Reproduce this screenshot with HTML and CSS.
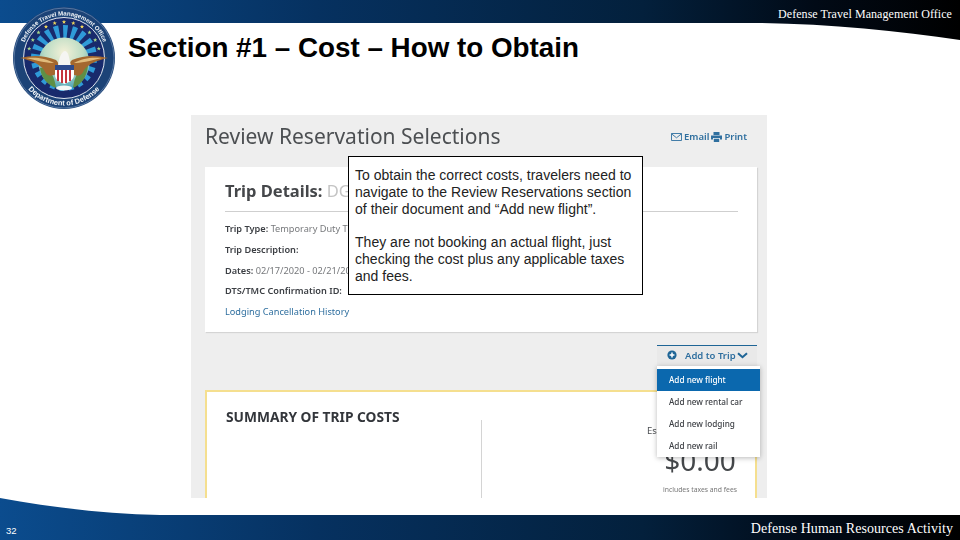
FILE: index.html
```html
<!DOCTYPE html>
<html lang="en">
<head>
<meta charset="utf-8">
<title>Section #1 – Cost – How to Obtain</title>
<link rel="stylesheet" href="styles.css">
</head>
<body>
<div class="slide">
  <header class="top">
    <svg class="swoosh swoosh-top" width="960" height="42" viewBox="0 0 960 42">
      <defs>
        <linearGradient id="barTop" gradientUnits="userSpaceOnUse" x1="0" y1="0" x2="960" y2="0">
          <stop offset="0" stop-color="#0b4c8e"/><stop offset=".33" stop-color="#063160"/><stop offset=".67" stop-color="#03203c"/><stop offset=".85" stop-color="#010a16"/><stop offset="1" stop-color="#000"/>
        </linearGradient>
      </defs>
      <path d="M0 0H960V40C900 31 830 24 762 23H0Z" fill="url(#barTop)"/>
    </svg>
    <span class="org">Defense Travel Management Office</span>
  </header>

  <svg class="seal" width="104" height="104" viewBox="-52 -52 104 104" aria-label="Department of Defense seal">
    <defs>
      <path id="arcTop" d="M-42.5 0A42.5 42.5 0 0 1 42.5 0"/>
      <path id="arcBottom" d="M-47.5 0A47.5 47.5 0 0 0 47.5 0"/>
      <polygon id="st" points="0,-2.2 .6,-.7 2.1,-.7 .9,.3 1.3,1.8 0,.9 -1.3,1.8 -.9,.3 -2.1,-.7 -.6,-.7"/>
      <radialGradient id="globe" cx=".5" cy=".3" r=".75"><stop offset="0" stop-color="#f4f1d8"/><stop offset=".5" stop-color="#bcdcc4"/><stop offset="1" stop-color="#3f9cb8"/></radialGradient>
    </defs>
    <circle r="51" fill="#1c4377"/>
    <circle r="50" fill="none" stroke="#7f9bbd" stroke-width=".6"/>
    <circle r="40.5" fill="#182a6c" stroke="#dfe6ee" stroke-width="1"/>
    <circle r="20" fill="none" stroke="#2f9ad8" stroke-width="26" stroke-dasharray="3.2 3"/>
    <g fill="#f0d65a">
      <use href="#st" x="0" y="-36"/><use href="#st" x="-9.3" y="-34.8"/><use href="#st" x="9.3" y="-34.8"/>
      <use href="#st" x="-18" y="-31.2"/><use href="#st" x="18" y="-31.2"/>
    </g>
    <g fill="#a8d68a">
      <use href="#st" x="-25.5" y="-25.5"/><use href="#st" x="25.5" y="-25.5"/>
      <use href="#st" x="-31.2" y="-18"/><use href="#st" x="31.2" y="-18"/>
      <use href="#st" x="-34.8" y="-9.3"/><use href="#st" x="34.8" y="-9.3"/>
    </g>
    <circle cy="5" r="25.5" fill="url(#globe)"/>
    <path d="M-24 10C-14 8-9 20-8 30-16 27-23 20-24 10ZM24 8C15 8 10 20 9 30 16 27 23 20 24 8Z" fill="#5f8f45"/>
    <path d="M-44 0C-32-3-20-3-8 2-4 6-4 12-8 16-14 19-18 18-20 12-24 6-34 2-44 0Z" fill="#a4682f"/>
    <path d="M44 0C32-3 20-3 8 2 4 6 4 12 8 16 14 19 18 18 20 12 24 6 34 2 44 0Z" fill="#a4682f"/>
    <path d="M-38 0C-28-1-18 0-10 5-16 5-26 3-38 0ZM38 0C28-1 18 0 10 5 16 5 26 3 38 0Z" fill="#e1bc7c"/>
    <path d="M-6 8C-5 0-3-6 1-7 5-6 5 0 7 8Z" fill="#f5f5f2"/>
    <path d="M-9 7H10V17C10 22 5 24 .5 26-4 24-9 22-9 17Z" fill="#fff"/>
    <path d="M-9 7H10V12H-9Z" fill="#2c4a8c"/>
    <path d="M-7 12H-5V23H-7ZM-3 12H-1V25H-3ZM1 12H3V25H1ZM5 12H7V23H5Z" fill="#c4343c"/>
    <ellipse cx="0" cy="30" rx="8" ry="2.6" fill="#f3f6f4"/>
    <text class="seal-text seal-text-top"><textPath href="#arcTop" startOffset="50%" text-anchor="middle">Defense Travel Management Office</textPath></text>
    <text class="seal-text"><textPath href="#arcBottom" startOffset="50%" text-anchor="middle">Department of Defense</textPath></text>
  </svg>

  <main class="body">
    <h1 class="title">Section #1 – Cost – How to Obtain</h1>

    <section class="shot">
      <div class="shot-blur">
        <div class="shot-head">
          <h2 class="shot-title">Review Reservation Selections</h2>
          <div class="shot-links">
            <svg class="ico" width="11" height="8" viewBox="0 0 11 8"><path d="M.5.5H10.5V7.5H.5ZM.5.8L5.5 4.8 10.5.8" fill="none" stroke="#2f6f9f" stroke-width=".9"/></svg>
            <span>Email</span>
            <svg class="ico" width="11" height="10" viewBox="0 0 11 10"><path d="M2.5 0H8.5V3H2.5ZM0 3.5H11V7.5H9V6H2V7.5H0ZM2.8 6.8H8.2V10H2.8Z" fill="#2f6f9f"/></svg>
            <span>Print</span>
          </div>
        </div>

        <div class="card">
          <h3 class="card-title">Trip Details: <span class="card-title-dim">DG</span></h3>
          <hr class="rule">
          <p class="row"><b>Trip Type:</b> Temporary Duty Tr</p>
          <p class="row"><b>Trip Description:</b></p>
          <p class="row"><b>Dates:</b> 02/17/2020 - 02/21/202</p>
          <p class="row"><b>DTS/TMC Confirmation ID:</b></p>
          <p class="row link">Lodging Cancellation History</p>
        </div>

        <div class="add-row">
          <div class="add-btn">
            <svg width="10" height="10" viewBox="0 0 10 10"><circle cx="5" cy="5" r="4.6" fill="#1f6596"/><path d="M5 2.6V7.4M2.6 5H7.4" stroke="#fff" stroke-width="1.5"/></svg>
            <span class="add-label">Add to Trip</span>
            <svg width="11" height="7" viewBox="0 0 11 7"><path d="M1 1.2L5.5 5.2 10 1.2" fill="none" stroke="#1f6596" stroke-width="2"/></svg>
          </div>
        </div>

        <div class="summary">
          <div class="summary-left"><h3 class="summary-title">SUMMARY OF TRIP COSTS</h3></div>
          <div class="summary-right">
            <p class="est">Es</p>
            <p class="amount">$0.00</p>
            <p class="fine">includes taxes and fees</p>
          </div>
        </div>

        <ul class="menu">
          <li class="menu-item active">Add new flight</li>
          <li class="menu-item">Add new rental car</li>
          <li class="menu-item">Add new lodging</li>
          <li class="menu-item">Add new rail</li>
        </ul>
      </div>

      <div class="callout">
        <p>To obtain the correct costs, travelers need to navigate to the Review Reservations section of their document and “Add new flight”.</p>
        <p>They are not booking an actual flight, just checking the cost plus any applicable taxes and fees.</p>
      </div>
    </section>
  </main>

  <footer class="bottom">
    <svg class="swoosh swoosh-bottom" width="960" height="43" viewBox="0 0 960 43">
      <defs>
        <linearGradient id="barBottom" gradientUnits="userSpaceOnUse" x1="0" y1="0" x2="960" y2="0">
          <stop offset="0" stop-color="#0b4c8e"/><stop offset=".33" stop-color="#063160"/><stop offset=".67" stop-color="#03203c"/><stop offset=".85" stop-color="#010a16"/><stop offset="1" stop-color="#000"/>
        </linearGradient>
      </defs>
      <path d="M0 1C50 10 105 17 160 18H960V43H0Z" fill="url(#barBottom)"/>
    </svg>
    <span class="page-no">32</span>
    <span class="org-foot">Defense Human Resources Activity</span>
  </footer>
</div>
</body>
</html>
```
FILE: styles.css
```css
* { box-sizing: border-box; }
html, body { margin: 0; padding: 0; background: #fff; }
.slide {
  position: relative;
  width: 960px;
  height: 540px;
  overflow: hidden;
  display: flex;
  flex-direction: column;
  background: #fff;
  font-family: "Liberation Sans", Arial, sans-serif;
}

/* top and bottom bars */
.top {
  position: relative;
  height: 24px;
  flex: none;
  display: flex;
  justify-content: flex-end;
  align-items: flex-start;
  padding: 7px 8px 0 0;
}
.swoosh { position: absolute; left: 0; display: block; }
.swoosh-top { top: 0; }
.swoosh-bottom { top: -18px; }
.org {
  position: relative;
  font: 12px/14px "Liberation Serif", "Times New Roman", serif;
  letter-spacing: .06px;
  color: #fff;
}

.seal { position: absolute; left: 12px; top: 6px; z-index: 2; filter: blur(.35px); }
.seal-text {
  font: 700 7.4px "Liberation Sans", Arial, sans-serif;
  fill: #f2f5f8;
}
.seal-text-top { font-size: 6.1px; }

/* main area */
.body {
  flex: 1;
  min-height: 0;
  display: flex;
  flex-direction: column;
}
.title {
  margin: 7px 0 0 128px;
  font: 700 27.8px/33px "Liberation Sans", Arial, sans-serif;
  color: #000;
  height: 84px;
}

.shot {
  position: relative;
  width: 576px;
  height: 383px;
  margin-left: 191px;
  background: #eeeeee;
}
.shot-blur {
  position: relative;
  height: 100%;
  padding: 0 10px 0 14px;
  overflow: hidden;
  font-family: "Noto Sans", sans-serif;
  filter: blur(.35px);
}
.shot-head {
  height: 52px;
  display: flex;
  justify-content: space-between;
  align-items: flex-start;
  padding-top: 6px;
}
.shot-title {
  margin: 0;
  font: 400 21px/30px "Noto Sans", sans-serif;
  color: #4c4f52;
}
.shot-links {
  display: flex;
  align-items: center;
  gap: 2px;
  margin: 9px 10px 0 0;
  font-size: 9.5px;
  font-weight: 600;
  line-height: 13px;
  color: #2f6f9f;
}

.card {
  height: 165px;
  background: #fff;
  padding: 12px 19px 0 20px;
  box-shadow: 1px 1px 1px #d4d4d4;
}
.card-title {
  margin: 0;
  font: 700 16.5px/24px "Noto Sans", sans-serif;
  color: #45474a;
}
.card-title-dim { font-weight: 400; color: #c4c4c4; }
.rule {
  margin: 8px 0 7px;
  border: 0;
  border-top: 1px solid #cfcfcf;
}
.row {
  margin: 0;
  height: 20.8px;
  font-size: 9.2px;
  line-height: 20px;
  color: #77797c;
}
.row b { color: #3c3f44; font-weight: 600; }
.link { color: #2f6f9f; }

.add-row {
  display: flex;
  justify-content: flex-end;
  margin-top: 13px;
  height: 45px;
}
.add-btn {
  width: 100px;
  height: 21px;
  padding: 0 0 2px 10px;
  border-top: 1px solid #1f6596;
  background: #e9e9e9;
  display: flex;
  align-items: center;
  font-size: 9.5px;
  font-weight: 600;
  color: #2f6f9f;
}
.add-label { margin: 0 2px 0 8px; width: 50px; white-space: nowrap; }
.summary {
  display: flex;
  height: 150px;
  background: #fff;
  border: solid #f5df8f;
  border-width: 2px 2px 0 2px;
}
.summary-left {
  width: 275px;
  padding: 16px 0 0 19px;
  position: relative;
}
.summary-left::after {
  content: "";
  position: absolute;
  right: 0;
  top: 28px;
  bottom: 0;
  width: 1px;
  background: #d4d4d4;
}
.summary-title {
  margin: 0;
  font: 700 13.75px/17px "Noto Sans", sans-serif;
  color: #33363b;
}
.summary-right {
  flex: 1;
  padding-top: 32px;
  display: flex;
  flex-direction: column;
  align-items: flex-end;
  text-align: center;
  color: #4c4f52;
}
.est { margin: 0; width: 108px; text-align: left; font-size: 9.5px; line-height: 14px; }
.amount { margin: -1px 0 1px; width: 110px; font-size: 28px; line-height: 46px; color: #44474a; }
.fine { margin: 1px 0 0; width: 110px; font-size: 6.8px; line-height: 10px; color: #777; }

.menu {
  position: absolute;
  left: 466px;
  top: 251px;
  width: 103px;
  margin: 0;
  padding: 3px 0 0;
  list-style: none;
  background: #fff;
  box-shadow: 0 1px 5px rgba(0, 0, 0, .28);
}
.menu-item {
  height: 22px;
  padding-left: 12px;
  font-size: 8.2px;
  line-height: 21.5px;
  font-weight: 500;
  color: #3c3f44;
}
.menu-item.active { background: #0b68ae; color: #fff; }

.callout {
  position: absolute;
  left: 157px;
  top: 41px;
  width: 295px;
  height: 139px;
  padding: 10px 5px 0 6px;
  background: #fff;
  border: 1px solid #000;
  font-size: 14px;
  line-height: 16.85px;
  letter-spacing: .02px;
  color: #222;
}
.callout p { margin: 0 0 16.85px; }

.bottom {
  position: relative;
  flex: none;
  height: 25px;
  display: flex;
  justify-content: space-between;
  align-items: center;
  padding: 2px 7px 0 6px;
}
.page-no {
  position: relative;
  font-size: 9.5px;
  color: #fff;
  margin-top: 3px;
}
.org-foot {
  position: relative;
  font: 14px/16px "Liberation Serif", "Times New Roman", serif;
  letter-spacing: .06px;
  color: #fff;
}
```
